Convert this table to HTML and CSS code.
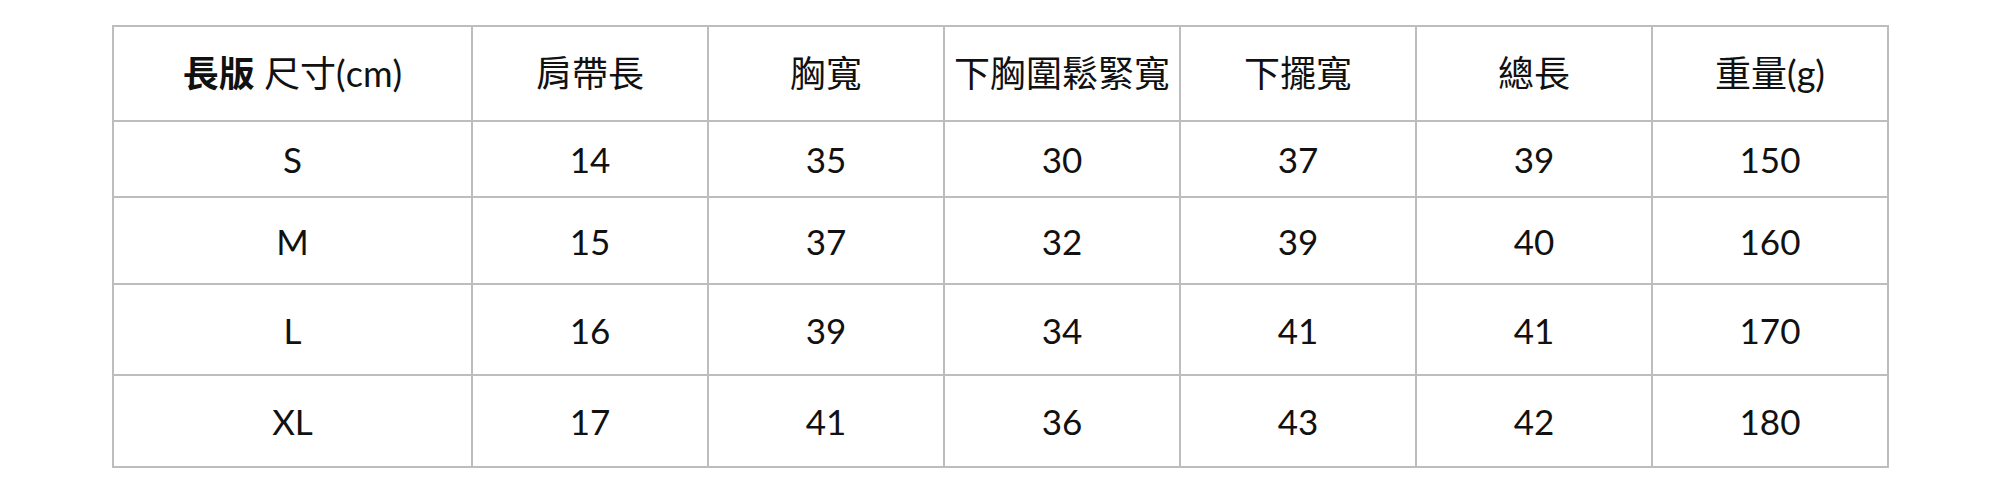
FILE: index.html
```html
<!DOCTYPE html>
<html lang="zh-Hant">
<head>
<meta charset="utf-8">
<title>尺寸表</title>
<link rel="stylesheet" href="styles.css">
</head>
<body>
<div class="page">
  <table class="size-table">
    <colgroup>
      <col class="c-first">
      <col class="c">
      <col class="c">
      <col class="c">
      <col class="c">
      <col class="c">
      <col class="c">
    </colgroup>
    <thead>
      <tr class="r-head">
        <th><strong>長版</strong> 尺寸(cm)</th>
        <th>肩帶長</th>
        <th>胸寬</th>
        <th>下胸圍鬆緊寬</th>
        <th>下擺寬</th>
        <th>總長</th>
        <th>重量(g)</th>
      </tr>
    </thead>
    <tbody>
      <tr class="r-s"><td>S</td><td>14</td><td>35</td><td>30</td><td>37</td><td>39</td><td>150</td></tr>
      <tr class="r-m"><td>M</td><td>15</td><td>37</td><td>32</td><td>39</td><td>40</td><td>160</td></tr>
      <tr class="r-l"><td>L</td><td>16</td><td>39</td><td>34</td><td>41</td><td>41</td><td>170</td></tr>
      <tr class="r-xl"><td>XL</td><td>17</td><td>41</td><td>36</td><td>43</td><td>42</td><td>180</td></tr>
    </tbody>
  </table>
</div>
</body>
</html>
```

FILE: styles.css
```css
html, body {
  margin: 0;
  padding: 0;
  background: #ffffff;
}

.page {
  padding: 25px 0 0 112px;
}

.size-table {
  border-collapse: collapse;
  table-layout: fixed;
  width: 1776px;
  font-family: Lato, "Noto Sans CJK TC", sans-serif;
  font-size: 35px;
  color: #111111;
}

.c-first { width: 359px; }
.c { width: 236px; }

.size-table th,
.size-table td {
  border: 2px solid #bdbdbd;
  text-align: center;
  vertical-align: middle;
  padding: 0;
  font-weight: 400;
  line-height: 1.2;
}

.size-table th {
  font-size: 36px;
}

.size-table th strong {
  font-weight: 700;
}

.r-head { height: 95px; }
.r-s { height: 76px; }
.r-m { height: 87px; }
.r-l { height: 91px; }
.r-xl { height: 92px; }
```
